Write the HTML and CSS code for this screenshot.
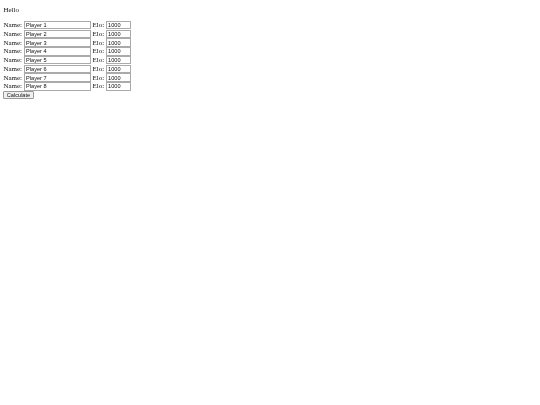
FILE: index.html
```html
<!DOCTYPE html>
<html>
<head>
<meta charset="utf-8">
<link rel="stylesheet" href="styles.css">
</head>
<body>
<main class="page">
<p class="greet">Hello</p>
<form class="players">
<div class="row"><span class="label">Name:</span><input class="field name" type="text" value="Player 1"><span class="label elo-label">Elo:</span><input class="field elo" type="text" value="1000"></div>
<div class="row"><span class="label">Name:</span><input class="field name" type="text" value="Player 2"><span class="label elo-label">Elo:</span><input class="field elo" type="text" value="1000"></div>
<div class="row"><span class="label">Name:</span><input class="field name" type="text" value="Player 3"><span class="label elo-label">Elo:</span><input class="field elo" type="text" value="1000"></div>
<div class="row"><span class="label">Name:</span><input class="field name" type="text" value="Player 4"><span class="label elo-label">Elo:</span><input class="field elo" type="text" value="1000"></div>
<div class="row"><span class="label">Name:</span><input class="field name" type="text" value="Player 5"><span class="label elo-label">Elo:</span><input class="field elo" type="text" value="1000"></div>
<div class="row"><span class="label">Name:</span><input class="field name" type="text" value="Player 6"><span class="label elo-label">Elo:</span><input class="field elo" type="text" value="1000"></div>
<div class="row"><span class="label">Name:</span><input class="field name" type="text" value="Player 7"><span class="label elo-label">Elo:</span><input class="field elo" type="text" value="1000"></div>
<div class="row"><span class="label">Name:</span><input class="field name" type="text" value="Player 8"><span class="label elo-label">Elo:</span><input class="field elo" type="text" value="1000"></div>
<button class="calc" type="button">Calculate</button>
</form>
</main>
</body>
</html>
```
FILE: styles.css
```css
html,
body {
  background: #fff;
}
body {
  margin: 0;
  font-family: "Liberation Serif", serif;
  font-size: 7px;
  line-height: 7.5px;
  color: #111;
}
.page {
  padding: 0 0 0 3.4px;
  will-change: transform;
}
.greet {
  margin: 0;
  padding: 7px 0 6.4px;
}
.players {
  margin: 0;
}
.row {
  display: flex;
  align-items: baseline;
  height: 8.75px;
}
.label {
  white-space: nowrap;
}
.elo-label {
  margin-left: 1.6px;
}
.field {
  box-sizing: border-box;
  height: 8.4px;
  margin: 0 0 0 1.8px;
  padding: 0 1.2px;
  border: 1px solid #aaa;
  border-radius: 0;
  background: #fff;
  font-family: "Liberation Sans", sans-serif;
  font-size: 5.6px;
  color: #111;
  outline: none;
}
.name {
  width: 67px;
}
.elo {
  width: 25px;
}
.calc {
  box-sizing: border-box;
  display: block;
  height: 8.2px;
  width: 31px;
  margin: 0.3px 0 0 -0.4px;
  padding: 0;
  border: 1px solid #999;
  border-radius: 1px;
  background: #efefef;
  font-family: "Liberation Sans", sans-serif;
  font-size: 5.6px;
  line-height: 6px;
  color: #111;
}
```
